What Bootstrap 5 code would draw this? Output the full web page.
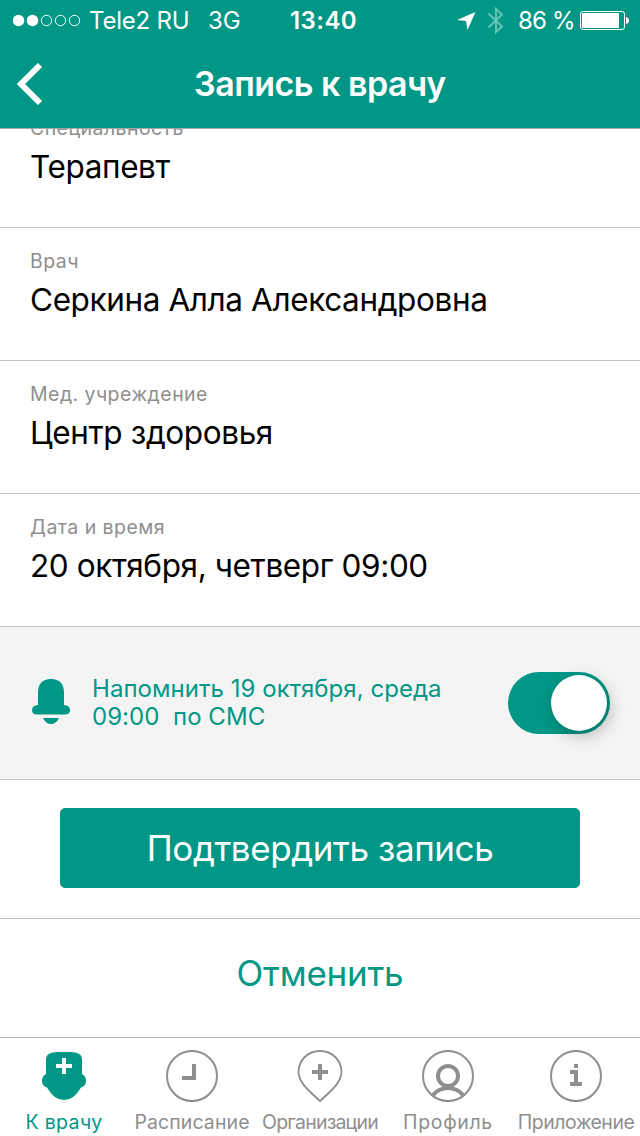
<!DOCTYPE html>
<html lang="ru">
<head>
<meta charset="utf-8">
<meta name="viewport" content="width=device-width, initial-scale=1">
<title>Запись к врачу</title>
<link href="https://cdn.jsdelivr.net/npm/bootstrap@5.3.0/dist/css/bootstrap.min.css" rel="stylesheet">
<style>
  :root { --brand: #009786; --line: #c4c4c4; --muted: #8e8e8e; }
  body { font-family: Inter, "Liberation Sans", sans-serif; color: #000; width: 640px; height: 1136px; line-height: 1; }
  .t { white-space: pre; line-height: 1; }
  svg { display: block; flex: none; }
  .topbar { background: var(--brand); height: 129px; border-bottom: 1px solid #a3a9a8; z-index: 2; }
  .statusbar { height: 40px; font-size: 24px; }
  .statusbar .t { padding-top: 2px; }
  .titlebar { height: 88px; padding-left: 16px; }
  .heading { font-size: 34px; font-weight: 600; letter-spacing: -.5px; margin-left: 150px; }
  .fields { margin-top: -34px; }
  .field-row { height: 133px; border-bottom: 1px solid var(--line); padding: 24px 30px 0; }
  .field-name { font-size: 19.5px; letter-spacing: .45px; color: var(--muted); height: 20px; margin-bottom: 12px; }
  .field-value { font-size: 31.5px; letter-spacing: -.38px; }
  .reminder { height: 153px; background: #f4f4f4; border-bottom: 1px solid var(--line); padding: 0 30px 0 32px; color: var(--brand); }
  .reminder-text { font-size: 24px; margin-left: 22px; }
  .reminder-text .t { line-height: 28px; letter-spacing: .04px; }
  .bell { margin-bottom: 5px; }
  .switch { width: 102px; height: 62px; border-radius: 31px; background: var(--brand); padding: 3px 3px 3px 43px; }
  .knob { width: 56px; height: 56px; border-radius: 50%; background: #fff; box-shadow: 3px 5px 16px rgba(0,0,0,.25); }
  .confirm { height: 139px; border-bottom: 1px solid var(--line); padding: 28px 60px 0; }
  .btn-brand { --bs-btn-color: #fff; --bs-btn-bg: var(--brand); --bs-btn-border-color: var(--brand); --bs-btn-hover-bg: #008577; --bs-btn-hover-color: #fff; height: 80px; font-size: 35px; border-radius: 5px; letter-spacing: -.42px; }
  .cancel { height: 118px; font-size: 35px; color: var(--brand); padding: 0 0 10px; letter-spacing: -.25px; }
  .tabs { height: 99px; border-top: 1px solid #b2b2b2; background: #fff; font-size: 19.5px; color: var(--muted); }
  .tab { width: 128px; padding-top: 12px; gap: 11px; }
  .tab.active { color: var(--brand); }
</style>
</head>
<body class="d-flex flex-column overflow-hidden bg-white">
  <header class="topbar position-relative text-white flex-shrink-0">
    <div class="statusbar d-flex align-items-center">
      <svg width="70" height="14" style="margin-left:12px" fill="none" stroke="#fff"><g fill="#fff" stroke="none"><circle cx="6.500" cy="7.500" r="5.800"/><circle cx="20.500" cy="7.500" r="5.800"/></g><circle cx="34.500" cy="7.500" r="5.200"/><circle cx="48.500" cy="7.500" r="5.200"/><circle cx="62.500" cy="7.500" r="5.200"/></svg>
      <span class="t" style="margin-left:7px;width:119px;letter-spacing:-.2px">Tele2 RU</span>
      <span class="t" style="width:82px;letter-spacing:0">3G</span>
      <span class="t" style="width:167px;font-weight:600;letter-spacing:.45px">13:40</span>
      <svg width="20" height="20" viewBox="0 0 20 20"><path d="M18.500 2 0 10 9 11 10.500 20Z" fill="#fff"/></svg>
      <svg width="18" height="28" viewBox="0 0 18 28" style="margin-left:10px" fill="none" stroke="#66c1b7" stroke-width="2"><path d="M1.500 7.500 15 20.500 9 26V3l6 5.500L1.500 21.500"/></svg>
      <span class="t" style="margin-left:13px;width:62px;letter-spacing:-.8px">86 %</span>
      <svg width="50" height="20" viewBox="0 0 50 20"><rect x=".5" y="1.500" width="44" height="18" rx="2.500" fill="none" stroke="#fff"/><rect x="2" y="3" width="37" height="15" rx="1" fill="#fff"/><path d="M46 7q3 1 3 3.500t-3 3.500Z" fill="#fff"/></svg>
    </div>
    <div class="titlebar d-flex align-items-center">
      <svg width="28" height="44" viewBox="0 0 28 44" fill="none" stroke="#fff" stroke-width="6"><path d="M24 3 5 22 24 41"/></svg>
      <span class="heading t">Запись к врачу</span>
    </div>
  </header>

  <main class="flex-shrink-0">
    <section class="fields">
      <div class="field-row d-flex flex-column align-items-start"><span class="field-name t">Специальность</span><span class="field-value t">Терапевт</span></div>
      <div class="field-row d-flex flex-column align-items-start"><span class="field-name t">Врач</span><span class="field-value t">Серкина Алла Александровна</span></div>
      <div class="field-row d-flex flex-column align-items-start"><span class="field-name t">Мед. учреждение</span><span class="field-value t">Центр здоровья</span></div>
      <div class="field-row d-flex flex-column align-items-start"><span class="field-name t">Дата и время</span><span class="field-value t">20 октября, четверг 09:00</span></div>
    </section>
    <section class="reminder d-flex align-items-center">
      <svg class="bell" width="38" height="46" viewBox="0 0 38 46" fill="currentColor"><path d="M6 27V15Q6 1 19 1T32 15V27Q38 27.500 38 32T33 36.500H5Q0 36.500 0 32T6 27ZM11 40H27Q24 46 19 46T11 40Z"/></svg>
      <div class="reminder-text d-flex flex-column align-items-start me-auto"><span class="t">Напомнить 19 октября, среда</span><span class="t">09:00  по СМС</span></div>
      <div class="switch" role="switch" aria-checked="true"><div class="knob"></div></div>
    </section>
    <section class="confirm"><button class="btn btn-brand w-100 p-0"><span class="t">Подтвердить запись</span></button></section>
    <button class="cancel btn border-0 rounded-0 w-100"><span class="t">Отменить</span></button>
  </main>

  <nav class="tabs d-flex flex-shrink-0">
    <div class="tab active d-flex flex-column align-items-center">
      <svg width="52" height="52" viewBox="0 0 52 52"><path d="M8 24V9Q8 2 20 2H32Q44 2 44 9V24Q48 26 48 31 48 36 43 37.500 36 50 26 50T9 37.500Q4 36 4 31 4 26 8 24Z" fill="currentColor"/><path d="M26 8V24M18 16H34" stroke="#fff" stroke-width="4"/></svg>
      <span class="t" style="letter-spacing:.35px">К врачу</span>
    </div>
    <div class="tab d-flex flex-column align-items-center">
      <svg width="52" height="52" viewBox="0 0 52 52" fill="none" stroke="currentColor"><circle cx="26" cy="26" r="25" stroke-width="2"/><path d="M28 14V28H16" stroke-width="4"/></svg>
      <span class="t" style="letter-spacing:.1px">Расписание</span>
    </div>
    <div class="tab d-flex flex-column align-items-center">
      <svg width="52" height="52" viewBox="0 0 52 52" fill="none" stroke="currentColor"><path d="M26 1C14 1 4.500 10 4.500 22 4.500 33 17 42.500 26 51 35 42.500 47.500 33 47.500 22 47.500 10 38 1 26 1Z" stroke-width="1.800"/><path d="M26 14V30M18 22H34" stroke-width="4"/></svg>
      <span class="t" style="letter-spacing:-.8px">Организации</span>
    </div>
    <div class="tab d-flex flex-column align-items-center">
      <svg width="52" height="52" viewBox="0 0 52 52" fill="none" stroke="currentColor"><circle cx="26" cy="26" r="25" stroke-width="2"/><circle cx="26" cy="26" r="10" stroke-width="4"/><path d="M11 45Q17 38 26 38T41 45" stroke-width="4"/></svg>
      <span class="t" style="letter-spacing:.65px">Профиль</span>
    </div>
    <div class="tab d-flex flex-column align-items-center">
      <svg width="52" height="52" viewBox="0 0 52 52"><circle cx="26" cy="26" r="25" fill="none" stroke="currentColor" stroke-width="2"/><path d="M24 14h4v4h-4ZM20 20h8v12h4v4H20v-4h4v-8h-4Z" fill="currentColor"/></svg>
      <span class="t" style="letter-spacing:-.5px">Приложение</span>
    </div>
  </nav>
<script src="https://cdn.jsdelivr.net/npm/bootstrap@5.3.0/dist/js/bootstrap.bundle.min.js"></script>
</body>
</html>
